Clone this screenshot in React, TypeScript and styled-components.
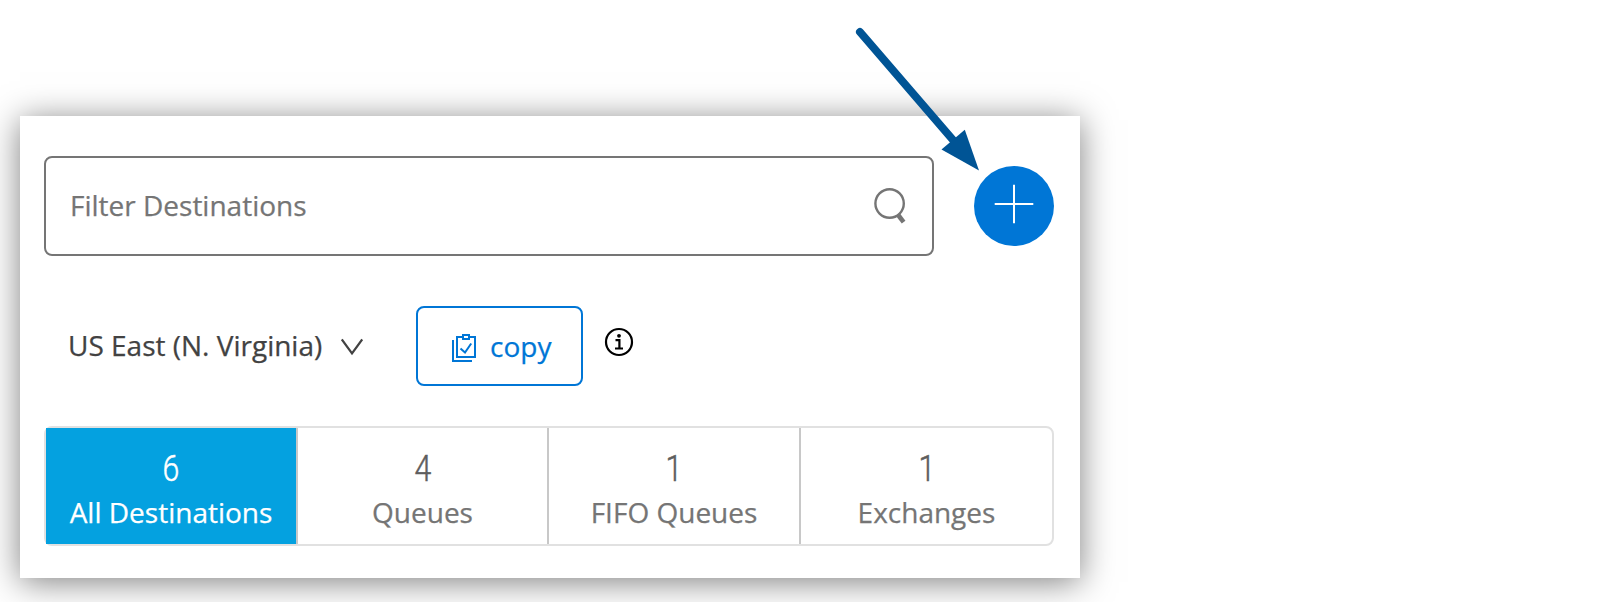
import React from "react";
import styled, { createGlobalStyle } from "styled-components";

const GlobalStyle = createGlobalStyle`
  * { box-sizing: border-box; }
  html, body { margin: 0; height: 100%; overflow: hidden; background: #fff; }
  body { font-family: "Open Sans", "Noto Sans", sans-serif; -webkit-text-stroke: 0.25px currentColor; }
  button, input { font: inherit; }
`;

const Page = styled.main`
  position: relative;
  width: 1618px;
  height: 602px;
  padding: 116px 0 0 20px;
  overflow: hidden;
`;

const Panel = styled.section`
  display: flex;
  flex-direction: column;
  width: 1060px;
  height: 462px;
  padding: 40px 26px 32px 24px;
  background: #fff;
  box-shadow: 0 4px 32px rgba(0, 0, 0, 0.5);
`;

const SearchRow = styled.div`
  display: flex;
  align-items: center;
  justify-content: space-between;
  height: 100px;
`;

const SearchField = styled.label`
  display: flex;
  align-items: center;
  justify-content: space-between;
  width: 890px;
  height: 100px;
  padding: 0 26px 0 24px;
  border: 2px solid #757575;
  border-radius: 8px;
`;

const SearchInput = styled.input`
  flex: 1;
  min-width: 0;
  padding: 0 0 2px;
  border: 0;
  outline: 0;
  background: transparent;
  font-size: 28px;
  line-height: 40px;
  color: #757575;
  &::placeholder { color: #757575; opacity: 1; }
`;

const AddButton = styled.button`
  display: flex;
  align-items: center;
  justify-content: center;
  width: 80px;
  height: 80px;
  padding: 0 0 4px;
  border: 0;
  border-radius: 50%;
  background: #0076d6;
`;

const RegionRow = styled.div`
  display: flex;
  height: 80px;
  margin-top: 50px;
`;

const RegionSelect = styled.button`
  display: flex;
  align-items: center;
  gap: 19px;
  width: 372px;
  padding: 0 0 2px 24px;
  border: 0;
  background: none;
  text-align: left;
  white-space: nowrap;
  font-size: 28px;
  line-height: 40px;
  color: #424242;
`;

const Chevron = styled.svg`
  margin-top: 4px;
`;

const CopyButton = styled.button`
  display: flex;
  align-items: center;
  gap: 14px;
  width: 167px;
  height: 80px;
  padding: 0 0 0 34px;
  border: 2px solid #0076d6;
  border-radius: 8px;
  background: #fff;
  font-size: 28px;
  line-height: 40px;
  color: #0076d6;
`;

const ClipboardIcon = styled.svg`
  margin-top: 4px;
`;

const InfoIcon = styled.svg`
  margin: 21px 0 0 21px;
`;

const Tabs = styled.div`
  display: grid;
  grid-template-columns: 252px 251px 252px 251px;
  height: 120px;
  margin-top: 40px;
  border: 2px solid #e1e1e1;
  border-radius: 8px;
`;

const Tab = styled.button<{ $active?: boolean }>`
  display: flex;
  flex-direction: column;
  align-items: center;
  padding: 20px 0 0;
  border: 0;
  border-right: 2px solid #c8c8c8;
  background: ${(p) => (p.$active ? "#04a1e0" : "transparent")};
  background-clip: padding-box;
  color: ${(p) => (p.$active ? "#fff" : "#757575")};
  &:last-child { border-right: 0; }
`;

const TabCount = styled.span<{ $active?: boolean }>`
  font-family: Roboto, sans-serif;
  font-size: 36px;
  font-weight: 300;
  line-height: 42px;
  color: ${(p) => (p.$active ? "#fff" : "#5e5e5e")};
  -webkit-text-stroke: 0.5px currentColor;
  transform: scaleX(0.84);
`;

const TabLabel = styled.span`
  margin-top: 2px;
  font-size: 28px;
  line-height: 40px;
  white-space: nowrap;
`;

const PointerArrow = styled.svg`
  position: absolute;
  left: 850px;
  top: 20px;
`;

const tabs = [
  { count: 6, label: "All Destinations", active: true },
  { count: 4, label: "Queues" },
  { count: 1, label: "FIFO Queues" },
  { count: 1, label: "Exchanges" },
];

export default function App() {
  return (
    <Page>
      <GlobalStyle />
      <Panel>
        <SearchRow>
          <SearchField>
            <SearchInput placeholder="Filter Destinations" />
            <svg width="32" height="38" viewBox="0 0 32 38" fill="none" stroke="#757575">
              <circle cx="15.6" cy="16.5" r="14.2" strokeWidth="2.4" />
              <path d="M23.8 27.5L29.6 35.2" strokeWidth="4.6" />
            </svg>
          </SearchField>
          <AddButton aria-label="Add">
            <svg width="40" height="40" viewBox="0 0 40 40" stroke="#fff" strokeWidth="2">
              <path d="M0.7 20H39.3M20 0.7V39.3" />
            </svg>
          </AddButton>
        </SearchRow>
        <RegionRow>
          <RegionSelect>
            US East (N. Virginia)
            <Chevron width="22" height="18" viewBox="0 0 22 18" fill="none" stroke="#424242" strokeWidth="2.2">
              <path d="M0.8 1.5L11 15.5L21.2 1.5" />
            </Chevron>
          </RegionSelect>
          <CopyButton>
            <ClipboardIcon width="24" height="28" viewBox="0 0 24 28" fill="none" stroke="#0076d6" strokeWidth="2">
              <path d="M1 6V27H20" />
              <path d="M11 3H5V23H23V3H17" />
              <rect x="11" y="1" width="6" height="4" />
              <path d="M8.5 14.5L13 18.5L19.2 9.5" />
            </ClipboardIcon>
            copy
          </CopyButton>
          <InfoIcon width="30" height="30" viewBox="0 0 30 30" fill="none" stroke="#000" strokeWidth="2.2">
            <circle cx="15" cy="15" r="13" />
            <circle cx="15" cy="8.8" r="1.9" fill="#000" stroke="none" />
            <path d="M11.5 13.2H15.4V21.5M11 21.5H19" />
          </InfoIcon>
        </RegionRow>
        <Tabs>
          {tabs.map((t) => (
            <Tab key={t.label} $active={t.active}>
              <TabCount $active={t.active}>{t.count}</TabCount>
              <TabLabel>{t.label}</TabLabel>
            </Tab>
          ))}
        </Tabs>
      </Panel>
      <PointerArrow width="140" height="160" viewBox="0 0 140 160">
        <path d="M10 12L103 120" stroke="#005495" strokeWidth="8" strokeLinecap="round" />
        <path d="M129 150.5L91.5 129.5L114.8 109.8Z" fill="#005495" />
      </PointerArrow>
    </Page>
  );
}
